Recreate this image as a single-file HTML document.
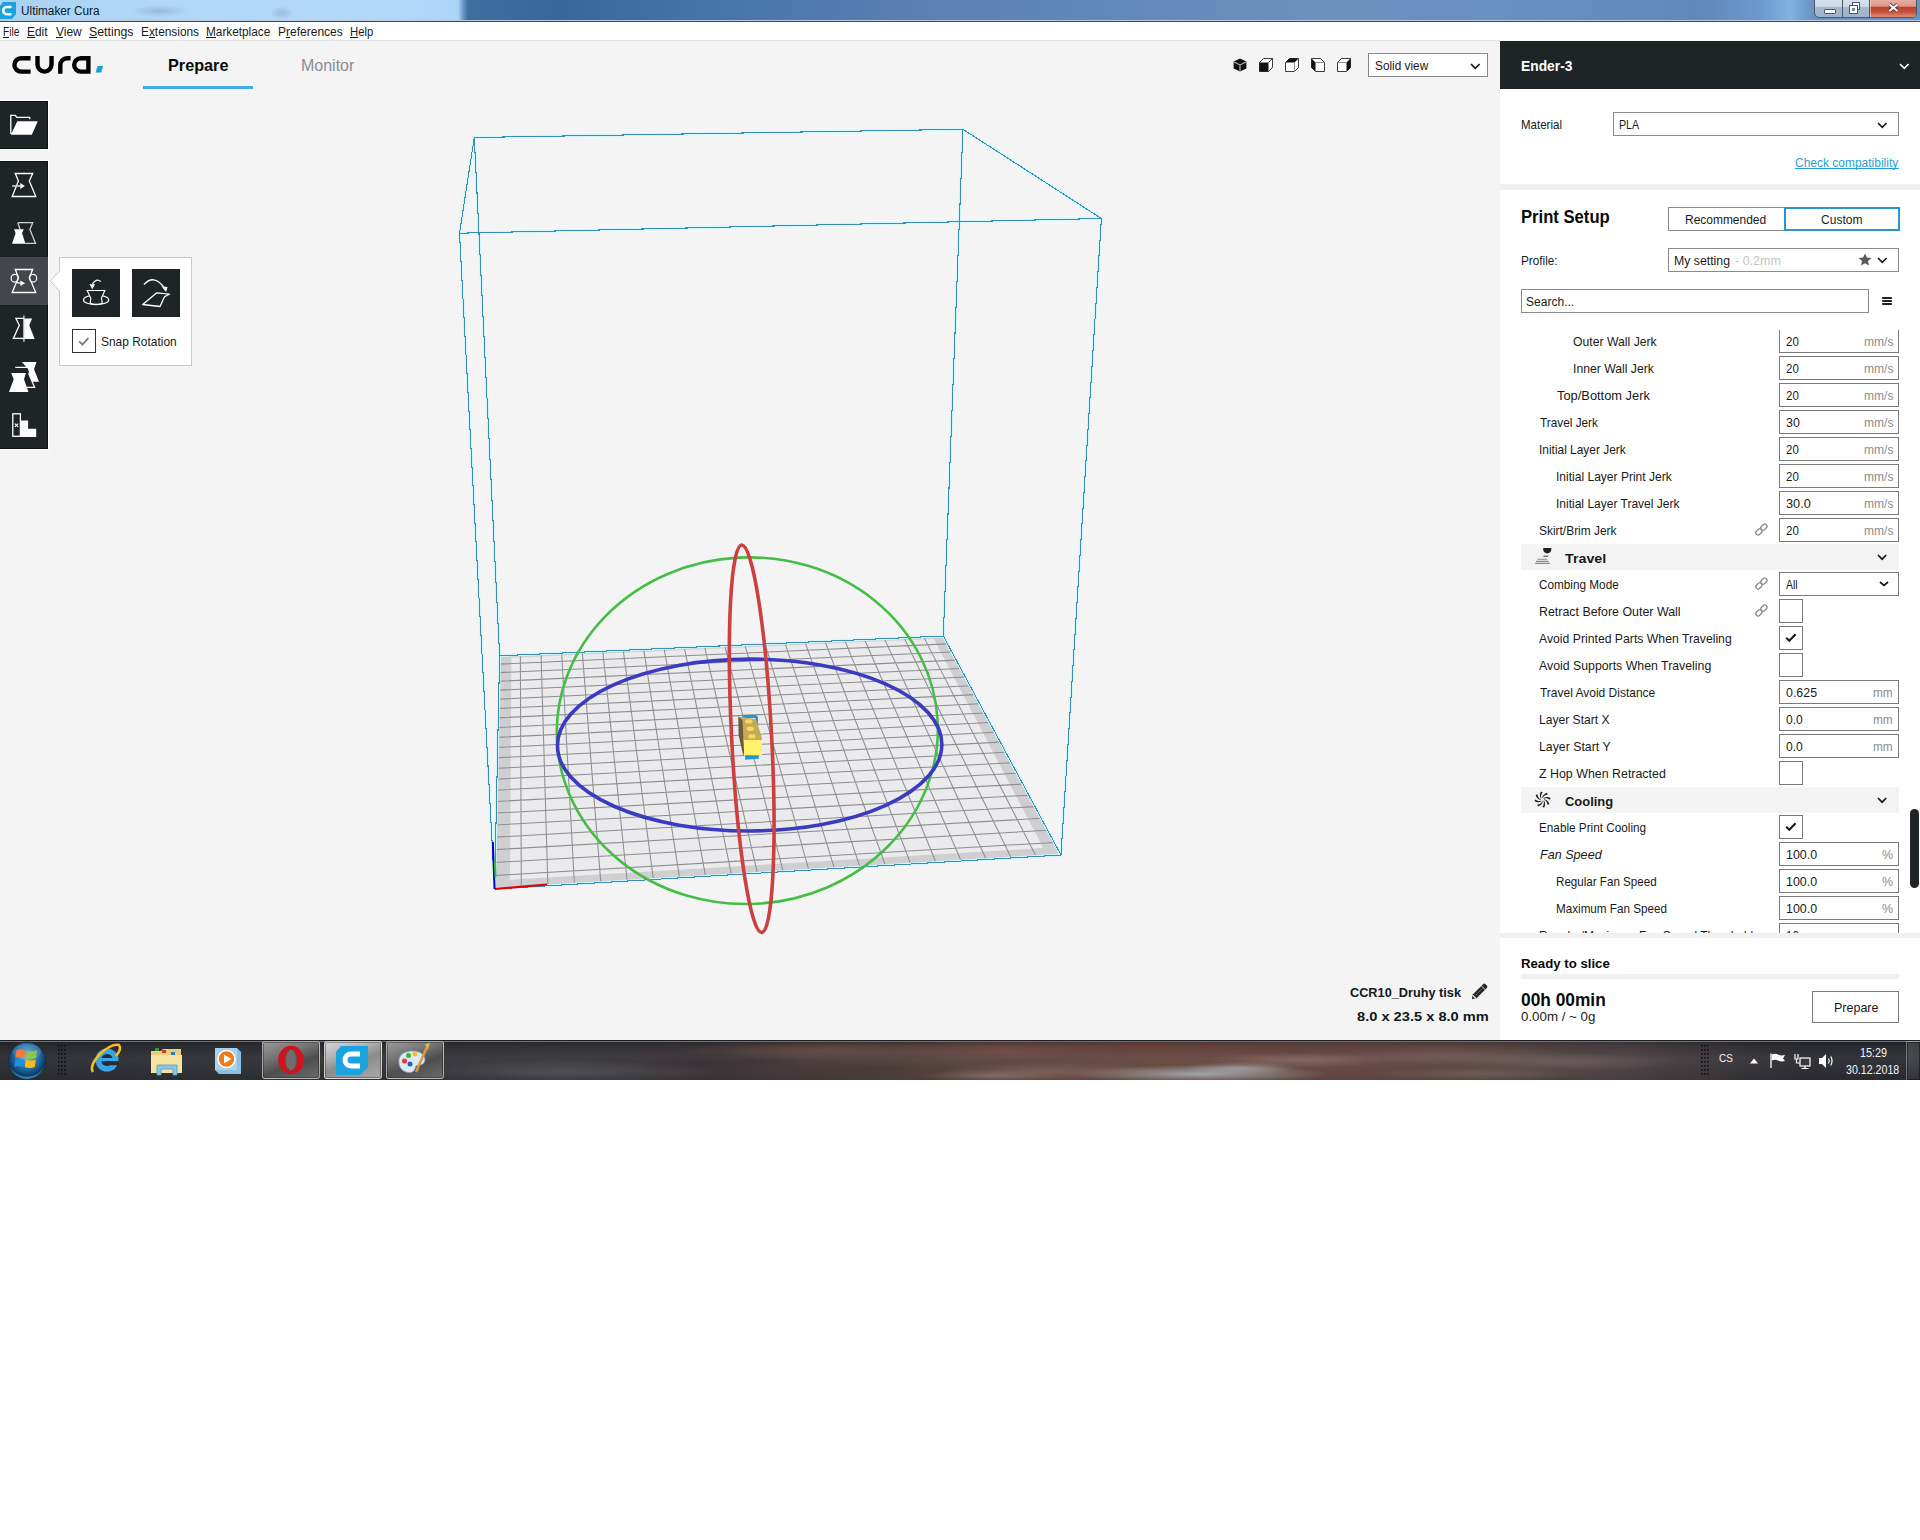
<!DOCTYPE html>
<html><head><meta charset="utf-8"><title>Ultimaker Cura</title>
<style>
html,body{margin:0;padding:0;}
body{width:1920px;height:1540px;position:relative;overflow:hidden;background:#fff;font-family:"Liberation Sans",sans-serif;}
.r,.t,.s{position:absolute;}
.t{white-space:nowrap;transform-origin:0 0;}
.s{overflow:visible;}
</style></head><body>
<div class="r" style="left:0.00px;top:0.00px;width:1920.00px;height:1540.00px;background:#ffffff;"></div>
<div class="r" style="left:0.00px;top:41.00px;width:1500.00px;height:999.00px;background:#f4f4f4;"></div>
<div class="r" style="left:0;top:0;width:1920px;height:21px;background:linear-gradient(90deg,#a8d2f2 0px,#aed6f6 100px,#b2d8f8 300px,#acd6f8 458px,#6a9ac8 463px,#3d6e9c 468px,#38689a 560px,#4474a8 700px,#587fb0 900px,#6088b8 1100px,#6a90bf 1300px,#6890c0 1500px,#6088b8 1700px,#6c9acb 1760px,#80b2de 1790px,#6a94c4 1812px,#6a92c2 1920px);"></div>
<div class="r" style="left:130px;top:5px;width:60px;height:12px;background:radial-gradient(ellipse at center,rgba(40,60,90,0.18),rgba(40,60,90,0) 70%)"></div>
<div class="r" style="left:270px;top:6px;width:24px;height:14px;background:radial-gradient(ellipse at center,rgba(40,60,90,0.18),rgba(40,60,90,0) 70%)"></div>
<div class="r" style="left:0.00px;top:20.00px;width:1920.00px;height:1.00px;background:#b6cce4;"></div>
<div class="r" style="left:0.00px;top:21.00px;width:1920.00px;height:1.00px;background:#3b4a5a;"></div>
<svg class="s" style="left:0.00px;top:2.00px;" width="16" height="17" viewBox="0 0 16 17"><path d="M3,0 H16 V12 L12,17 H0 V4 Z" fill="#1aa3de"/><path d="M11.5,5 H6.8 A3.6,3.6 0 0 0 6.8,12.2 H11.5" stroke="#fff" stroke-width="2.6" fill="none"/></svg>
<div class="t" style="left:21.40px;top:5.39px;font-size:12.50px;line-height:13.96px;color:#101820;transform:scaleX(0.9430);">Ultimaker Cura</div>
<div class="r" style="left:1814px;top:-3px;width:103px;height:21px;border:1px solid #4a5868;border-radius:0 0 5px 5px;box-sizing:border-box;overflow:hidden;background:linear-gradient(180deg,#dbe6f1 0,#c9d8e8 45%,#a4b9d0 46%,#9fb4cc 100%)"><div style="position:absolute;left:27px;top:0;width:1px;height:21px;background:#4a5868"></div><div style="position:absolute;left:54px;top:0;width:1px;height:21px;background:#4a5868"></div><div style="position:absolute;left:55px;top:0;width:47px;height:20px;background:linear-gradient(180deg,#eab4aa 0,#e0968a 42%,#b8402c 44%,#c8503a 70%,#e49a88 100%);box-shadow:inset 0 0 0 1px rgba(255,220,210,0.6)"></div></div>
<div class="r" style="left:1824.00px;top:8.50px;width:10.00px;height:3.00px;background:#fff;border:1px solid #4c5868;box-sizing:content-box;border-radius:1px;"></div>
<svg class="s" style="left:1848.00px;top:1.00px;" width="14" height="14" viewBox="0 0 14 14"><rect x="4.5" y="1.5" width="7" height="7" fill="#fff" stroke="#4c5868"/><rect x="1.5" y="4.5" width="8" height="8" fill="#fff" stroke="#4c5868"/><rect x="4" y="7" width="3" height="3" fill="#7a8898"/></svg>
<svg class="s" style="left:1886.00px;top:2.00px;" width="14" height="12" viewBox="0 0 14 12"><path d="M3.35,2.45 L11.45,8.95 M11.45,2.45 L3.35,8.95" stroke="#4a3030" stroke-width="3.6"/><path d="M3.35,2.45 L11.45,8.95 M11.45,2.45 L3.35,8.95" stroke="#fff" stroke-width="2.1"/></svg>
<div class="r" style="left:0.00px;top:22.00px;width:1920.00px;height:18.00px;background:#ffffff;"></div>
<div class="r" style="left:0.00px;top:40.00px;width:1920.00px;height:1.00px;background:#e2e2e2;"></div>
<div class="t" style="left:3.00px;top:25.79px;font-size:12.50px;line-height:13.96px;color:#1a1a1a;transform:scaleX(0.8192);">File</div>
<div class="r" style="left:3.00px;top:37.00px;width:6.25px;height:1.00px;background:#1a1a1a;"></div>
<div class="t" style="left:27.00px;top:25.79px;font-size:12.50px;line-height:13.96px;color:#1a1a1a;transform:scaleX(0.9517);">Edit</div>
<div class="r" style="left:27.00px;top:37.00px;width:7.94px;height:1.00px;background:#1a1a1a;"></div>
<div class="t" style="left:55.50px;top:25.79px;font-size:12.50px;line-height:13.96px;color:#1a1a1a;transform:scaleX(0.9583);">View</div>
<div class="r" style="left:55.50px;top:37.00px;width:7.99px;height:1.00px;background:#1a1a1a;"></div>
<div class="t" style="left:89.25px;top:25.79px;font-size:12.50px;line-height:13.96px;color:#1a1a1a;transform:scaleX(0.9852);">Settings</div>
<div class="r" style="left:89.25px;top:37.00px;width:8.21px;height:1.00px;background:#1a1a1a;"></div>
<div class="t" style="left:141.25px;top:25.79px;font-size:12.50px;line-height:13.96px;color:#1a1a1a;transform:scaleX(0.9485);">Extensions</div>
<div class="r" style="left:149.16px;top:37.00px;width:5.93px;height:1.00px;background:#1a1a1a;"></div>
<div class="t" style="left:206.25px;top:25.79px;font-size:12.50px;line-height:13.96px;color:#1a1a1a;transform:scaleX(0.9436);">Marketplace</div>
<div class="r" style="left:206.25px;top:37.00px;width:9.83px;height:1.00px;background:#1a1a1a;"></div>
<div class="t" style="left:278.25px;top:25.79px;font-size:12.50px;line-height:13.96px;color:#1a1a1a;transform:scaleX(0.9607);">Preferences</div>
<div class="r" style="left:286.26px;top:37.00px;width:4.00px;height:1.00px;background:#1a1a1a;"></div>
<div class="t" style="left:350.00px;top:25.79px;font-size:12.50px;line-height:13.96px;color:#1a1a1a;transform:scaleX(0.9044);">Help</div>
<div class="r" style="left:350.00px;top:37.00px;width:8.16px;height:1.00px;background:#1a1a1a;"></div>
<svg class="s" style="left:0.00px;top:40.00px;" width="120" height="50" viewBox="0 0 120 50"><g transform="translate(0,-40)" fill="#000" fill-rule="evenodd"><path d="M30.6,56 H21.1 A8.9,8.9 0 0 0 21.1,73.8 H30.6 V69.4 H21.1 A4.5,4.5 0 0 1 21.1,60.4 H30.6 Z"/><path d="M35.3,56 H39.7 V64.6 A4.8,4.8 0 0 0 49.3,64.6 V56 H53.75 V64.6 A9.2,9.2 0 0 1 35.3,64.6 Z"/><path d="M58.1,73.8 V65 A9,9 0 0 1 67.1,56 H70.6 V60.4 H67.1 A4.6,4.6 0 0 0 62.5,65 V73.8 Z"/><path d="M90.6,56 H80.9 A8.9,8.9 0 0 0 80.9,73.8 H90.6 Z M86.2,60.4 H80.9 A4.5,4.5 0 0 0 80.9,69.4 H86.2 Z"/><path d="M97.5,66 H103.2 L101.2,72.6 H95.6 Z" fill="#1e9fd8"/></g></svg>
<div class="t" style="left:167.50px;top:55.75px;font-size:17.30px;line-height:19.32px;color:#0a0a0a;font-weight:bold;transform:scaleX(0.9391);">Prepare</div>
<div class="t" style="left:301.00px;top:55.75px;font-size:17.30px;line-height:19.32px;color:#8c8c94;transform:scaleX(0.9258);">Monitor</div>
<div class="r" style="left:143.00px;top:86.00px;width:110.00px;height:3.00px;background:#44ace4;"></div>
<svg class="s" style="left:1232.50px;top:57.50px;" width="15" height="15" viewBox="0 0 15 15"><path d="M7,0.6 L13.4,3.6 L13.4,10.4 L7,13.6 L0.6,10.4 L0.6,3.6 Z" fill="#111"/><path d="M1,3.9 L7,7 L13,3.9 M7,7 V13.4" stroke="#bbb" stroke-width="1.1" fill="none"/></svg>
<svg class="s" style="left:1258.50px;top:57.50px;" width="15" height="15" viewBox="0 0 15 15"><path d="M0.5,4.5 L4.5,0.5 H13.5 V9.5 L9.5,13.5 H0.5 Z" fill="#fff" stroke="#1a1a1a" stroke-width="0.85" stroke-linejoin="miter"/><rect x="0.5" y="4.5" width="9" height="9" fill="#111"/><path d="M9.5,4.5 L13.5,0.5" stroke="#1a1a1a" stroke-width="0.85" stroke-linejoin="miter"/></svg>
<svg class="s" style="left:1284.50px;top:57.50px;" width="15" height="15" viewBox="0 0 15 15"><path d="M0.5,4.5 L4.5,0.5 H13.5 V9.5 L9.5,13.5 H0.5 Z" fill="#fff" stroke="#1a1a1a" stroke-width="0.85" stroke-linejoin="miter"/><path d="M0.5,4.5 L4.5,0.5 H13.5 L9.5,4.5 Z" fill="#111"/><path d="M9.5,4.5 V13.5" stroke="#888" stroke-width="0.9"/></svg>
<svg class="s" style="left:1310.50px;top:57.50px;" width="15" height="15" viewBox="0 0 15 15"><path d="M0.5,0.5 H9.5 L13.5,4.5 V13.5 H4.5 L0.5,9.5 Z" fill="#fff" stroke="#1a1a1a" stroke-width="0.85" stroke-linejoin="miter"/><path d="M0.5,0.5 L4.5,4.5 V13.5 L0.5,9.5 Z" fill="#111"/><path d="M4.5,4.5 H13.5" stroke="#888" stroke-width="0.9"/></svg>
<svg class="s" style="left:1336.50px;top:57.50px;" width="15" height="15" viewBox="0 0 15 15"><path d="M0.5,4.5 L4.5,0.5 H13.5 V9.5 L9.5,13.5 H0.5 Z" fill="#fff" stroke="#1a1a1a" stroke-width="0.85" stroke-linejoin="miter"/><path d="M9.5,4.5 L13.5,0.5 V9.5 L9.5,13.5 Z" fill="#111"/><path d="M0.5,4.5 H9.5" stroke="#888" stroke-width="0.9"/></svg>
<div class="r" style="left:1368.00px;top:53.00px;width:120.00px;height:24.00px;background:#fff;border:1px solid #8a8a8a;box-sizing:border-box;"></div>
<div class="t" style="left:1375.30px;top:58.66px;font-size:13.08px;line-height:14.61px;color:#1a1a1a;transform:scaleX(0.9033);">Solid view</div>
<svg class="s" style="left:1470.00px;top:62.50px;" width="10.6" height="6.3" viewBox="0 0 10.6 6.3"><path d="M1,1 L5.30,5.30 L9.60,1" stroke="#1a1a1a" stroke-width="1.7" fill="none"/></svg>
<div class="r" style="left:1500.00px;top:40.00px;width:420.00px;height:1000.00px;background:#ffffff;"></div>
<div class="r" style="left:1500.00px;top:41.00px;width:420.00px;height:48.00px;background:#1f2427;"></div>
<div class="t" style="left:1521.40px;top:57.91px;font-size:14.68px;line-height:16.40px;color:#fff;font-weight:bold;transform:scaleX(0.9422);">Ender-3</div>
<svg class="s" style="left:1899.00px;top:62.70px;" width="10.6" height="6.3" viewBox="0 0 10.6 6.3"><path d="M1,1 L5.30,5.30 L9.60,1" stroke="#fff" stroke-width="1.7" fill="none"/></svg>
<div class="t" style="left:1521.20px;top:118.30px;font-size:13.37px;line-height:14.94px;color:#1a1a1a;transform:scaleX(0.8620);">Material</div>
<div class="r" style="left:1613.00px;top:112.00px;width:286.00px;height:24.00px;background:#fff;border:1px solid #8a8a8a;box-sizing:border-box;"></div>
<div class="t" style="left:1619.20px;top:118.30px;font-size:13.37px;line-height:14.94px;color:#1a1a1a;transform:scaleX(0.7992);">PLA</div>
<svg class="s" style="left:1877.00px;top:121.50px;" width="10.6" height="6.3" viewBox="0 0 10.6 6.3"><path d="M1,1 L5.30,5.30 L9.60,1" stroke="#1a1a1a" stroke-width="1.7" fill="none"/></svg>
<div class="t" style="left:1795.30px;top:155.60px;font-size:13.37px;line-height:14.94px;color:#2a9fd6;transform:scaleX(0.8968);">Check compatibility</div>
<div class="r" style="left:1795.30px;top:168.00px;width:103.30px;height:1.00px;background:#2a9fd6;"></div>
<div class="r" style="left:1500.00px;top:184.00px;width:420.00px;height:6.00px;background:#f0f0f0;"></div>
<div class="t" style="left:1521.20px;top:208.32px;font-size:17.88px;line-height:19.97px;color:#0a0a0a;font-weight:bold;transform:scaleX(0.9313);">Print Setup</div>
<div class="r" style="left:1668.00px;top:207.00px;width:117.00px;height:24.00px;background:#fff;border:1px solid #8a8a8a;box-sizing:border-box;"></div>
<div class="r" style="left:1784.00px;top:207.00px;width:116.00px;height:24.00px;background:#fff;border:2px solid #2896c8;box-sizing:border-box;"></div>
<div class="t" style="left:1685.30px;top:213.30px;font-size:13.37px;line-height:14.94px;color:#1a1a1a;transform:scaleX(0.8954);">Recommended</div>
<div class="t" style="left:1821.00px;top:213.30px;font-size:13.37px;line-height:14.94px;color:#1a1a1a;transform:scaleX(0.9008);">Custom</div>
<div class="t" style="left:1521.20px;top:254.26px;font-size:13.08px;line-height:14.61px;color:#1a1a1a;transform:scaleX(0.8989);">Profile:</div>
<div class="r" style="left:1668.00px;top:248.00px;width:231.00px;height:24.00px;background:#fff;border:1px solid #8a8a8a;box-sizing:border-box;"></div>
<div class="t" style="left:1674.40px;top:254.26px;font-size:13.08px;line-height:14.61px;color:#1a1a1a;transform:scaleX(0.9394);">My setting</div>
<div class="t" style="left:1735.20px;top:254.26px;font-size:13.08px;line-height:14.61px;color:#c4c4c4;transform:scaleX(0.9568);">- 0.2mm</div>
<svg class="s" style="left:1858.00px;top:253.00px;" width="14" height="13" viewBox="0 0 14 13"><path d="M7,0.5 L8.9,4.6 L13.4,5 L10,8 L11,12.5 L7,10.2 L3,12.5 L4,8 L0.6,5 L5.1,4.6 Z" fill="#5a5a5a"/></svg>
<svg class="s" style="left:1877.00px;top:257.20px;" width="10.6" height="6.3" viewBox="0 0 10.6 6.3"><path d="M1,1 L5.30,5.30 L9.60,1" stroke="#1a1a1a" stroke-width="1.7" fill="none"/></svg>
<div class="r" style="left:1521.00px;top:289.00px;width:348.00px;height:24.00px;background:#fff;border:1px solid #8a8a8a;box-sizing:border-box;"></div>
<div class="t" style="left:1526.25px;top:295.16px;font-size:13.08px;line-height:14.61px;color:#1a1a1a;transform:scaleX(0.9207);">Search...</div>
<div class="r" style="left:1882.00px;top:297.00px;width:10.00px;height:1.60px;background:#222;border-radius:0.8px;"></div>
<div class="r" style="left:1882.00px;top:300.20px;width:10.00px;height:1.60px;background:#222;border-radius:0.8px;"></div>
<div class="r" style="left:1882.00px;top:303.40px;width:10.00px;height:1.60px;background:#222;border-radius:0.8px;"></div>
<div class="r" style="left:1500px;top:330px;width:420px;height:603px;overflow:hidden">
<div class="t" style="left:73.30px;top:6.12px;font-size:12.35px;line-height:13.80px;color:#1a1a1a;transform:scaleX(0.9897);">Outer Wall Jerk</div>
<div class="r" style="left:279.00px;top:-1.00px;width:120.00px;height:24.00px;background:#fff;border:1px solid #7a7a7a;box-sizing:border-box;"></div>
<div class="t" style="left:285.50px;top:6.12px;font-size:12.35px;line-height:13.80px;color:#1a1a1a;transform:scaleX(0.9314);">20</div>
<div class="t" style="left:363.50px;top:6.12px;font-size:12.35px;line-height:13.80px;color:#8c8c8c;transform:scaleX(0.9770);">mm/s</div>
<div class="t" style="left:73.30px;top:33.12px;font-size:12.35px;line-height:13.80px;color:#1a1a1a;transform:scaleX(0.9874);">Inner Wall Jerk</div>
<div class="r" style="left:279.00px;top:26.00px;width:120.00px;height:24.00px;background:#fff;border:1px solid #7a7a7a;box-sizing:border-box;"></div>
<div class="t" style="left:285.50px;top:33.12px;font-size:12.35px;line-height:13.80px;color:#1a1a1a;transform:scaleX(0.9314);">20</div>
<div class="t" style="left:363.50px;top:33.12px;font-size:12.35px;line-height:13.80px;color:#8c8c8c;transform:scaleX(0.9770);">mm/s</div>
<div class="t" style="left:57.30px;top:60.12px;font-size:12.35px;line-height:13.80px;color:#1a1a1a;transform:scaleX(1.0418);">Top/Bottom Jerk</div>
<div class="r" style="left:279.00px;top:53.00px;width:120.00px;height:24.00px;background:#fff;border:1px solid #7a7a7a;box-sizing:border-box;"></div>
<div class="t" style="left:285.50px;top:60.12px;font-size:12.35px;line-height:13.80px;color:#1a1a1a;transform:scaleX(0.9314);">20</div>
<div class="t" style="left:363.50px;top:60.12px;font-size:12.35px;line-height:13.80px;color:#8c8c8c;transform:scaleX(0.9770);">mm/s</div>
<div class="t" style="left:40.00px;top:87.12px;font-size:12.35px;line-height:13.80px;color:#1a1a1a;transform:scaleX(0.9564);">Travel Jerk</div>
<div class="r" style="left:279.00px;top:80.00px;width:120.00px;height:24.00px;background:#fff;border:1px solid #7a7a7a;box-sizing:border-box;"></div>
<div class="t" style="left:285.50px;top:87.12px;font-size:12.35px;line-height:13.80px;color:#1a1a1a;transform:scaleX(1.0042);">30</div>
<div class="t" style="left:363.50px;top:87.12px;font-size:12.35px;line-height:13.80px;color:#8c8c8c;transform:scaleX(0.9770);">mm/s</div>
<div class="t" style="left:39.40px;top:114.12px;font-size:12.35px;line-height:13.80px;color:#1a1a1a;transform:scaleX(0.9649);">Initial Layer Jerk</div>
<div class="r" style="left:279.00px;top:107.00px;width:120.00px;height:24.00px;background:#fff;border:1px solid #7a7a7a;box-sizing:border-box;"></div>
<div class="t" style="left:285.50px;top:114.12px;font-size:12.35px;line-height:13.80px;color:#1a1a1a;transform:scaleX(0.9314);">20</div>
<div class="t" style="left:363.50px;top:114.12px;font-size:12.35px;line-height:13.80px;color:#8c8c8c;transform:scaleX(0.9770);">mm/s</div>
<div class="t" style="left:56.40px;top:141.12px;font-size:12.35px;line-height:13.80px;color:#1a1a1a;transform:scaleX(0.9748);">Initial Layer Print Jerk</div>
<div class="r" style="left:279.00px;top:134.00px;width:120.00px;height:24.00px;background:#fff;border:1px solid #7a7a7a;box-sizing:border-box;"></div>
<div class="t" style="left:285.50px;top:141.12px;font-size:12.35px;line-height:13.80px;color:#1a1a1a;transform:scaleX(0.9314);">20</div>
<div class="t" style="left:363.50px;top:141.12px;font-size:12.35px;line-height:13.80px;color:#8c8c8c;transform:scaleX(0.9770);">mm/s</div>
<div class="t" style="left:56.40px;top:168.12px;font-size:12.35px;line-height:13.80px;color:#1a1a1a;transform:scaleX(0.9730);">Initial Layer Travel Jerk</div>
<div class="r" style="left:279.00px;top:161.00px;width:120.00px;height:24.00px;background:#fff;border:1px solid #7a7a7a;box-sizing:border-box;"></div>
<div class="t" style="left:285.50px;top:168.12px;font-size:12.35px;line-height:13.80px;color:#1a1a1a;transform:scaleX(1.0313);">30.0</div>
<div class="t" style="left:363.50px;top:168.12px;font-size:12.35px;line-height:13.80px;color:#8c8c8c;transform:scaleX(0.9770);">mm/s</div>
<div class="t" style="left:39.40px;top:195.12px;font-size:12.35px;line-height:13.80px;color:#1a1a1a;transform:scaleX(0.9663);">Skirt/Brim Jerk</div>
<svg class="s" style="left:254.00px;top:192.00px;" width="16" height="16" viewBox="0 0 16 16"><g fill="none" stroke="#8a8a8a" stroke-width="1.3"><rect x="1.5" y="7.7" width="6.8" height="4.4" rx="2" transform="rotate(-45 4.9 9.9)"/><rect x="6.5" y="2.9" width="6.8" height="4.4" rx="2" transform="rotate(-45 9.9 5.1)"/></g></svg>
<div class="r" style="left:279.00px;top:188.00px;width:120.00px;height:24.00px;background:#fff;border:1px solid #7a7a7a;box-sizing:border-box;"></div>
<div class="t" style="left:285.50px;top:195.12px;font-size:12.35px;line-height:13.80px;color:#1a1a1a;transform:scaleX(0.9314);">20</div>
<div class="t" style="left:363.50px;top:195.12px;font-size:12.35px;line-height:13.80px;color:#8c8c8c;transform:scaleX(0.9770);">mm/s</div>
<div class="r" style="left:21.00px;top:214.00px;width:378.00px;height:25.50px;background:#f3f3f3;"></div>
<div class="t" style="left:64.50px;top:221.69px;font-size:12.94px;line-height:14.45px;color:#1a1a1a;font-weight:bold;transform:scaleX(1.1016);">Travel</div>
<svg class="s" style="left:34.00px;top:218.00px;" width="17" height="18" viewBox="0 0 17 18"><path d="M9.2,0 H17.3 V1.5 A4,4 0 0 1 13.25,5.5 A4,4 0 0 1 9.2,1.5 Z" fill="#222"/><path d="M9.4,8.25 H14.1" stroke="#555" stroke-width="1.2"/><path d="M3.4,11.3 H13.3 M2.1,13.35 H14.6 M1.1,15.4 H15.9" stroke="#8a8a8a" stroke-width="1.1"/></svg>
<svg class="s" style="left:377.00px;top:223.60px;" width="12" height="8" viewBox="0 0 12 8"><path d="M1,1 L5.1,5.2 L9.2,1" stroke="#1a1a1a" stroke-width="1.7" fill="none"/></svg>
<div class="t" style="left:39.40px;top:249.12px;font-size:12.35px;line-height:13.80px;color:#1a1a1a;transform:scaleX(0.9525);">Combing Mode</div>
<svg class="s" style="left:254.00px;top:246.00px;" width="16" height="16" viewBox="0 0 16 16"><g fill="none" stroke="#8a8a8a" stroke-width="1.3"><rect x="1.5" y="7.7" width="6.8" height="4.4" rx="2" transform="rotate(-45 4.9 9.9)"/><rect x="6.5" y="2.9" width="6.8" height="4.4" rx="2" transform="rotate(-45 9.9 5.1)"/></g></svg>
<div class="r" style="left:279.00px;top:242.00px;width:120.00px;height:24.00px;background:#fff;border:1px solid #7a7a7a;box-sizing:border-box;"></div>
<div class="t" style="left:285.50px;top:249.12px;font-size:12.35px;line-height:13.80px;color:#1a1a1a;transform:scaleX(0.8448);">All</div>
<svg class="s" style="left:379.00px;top:251.00px;" width="12" height="8" viewBox="0 0 12 8"><path d="M1,1 L5,4.4 L9,1" stroke="#1a1a1a" stroke-width="1.7" fill="none"/></svg>
<div class="t" style="left:39.40px;top:276.12px;font-size:12.35px;line-height:13.80px;color:#1a1a1a;transform:scaleX(1.0051);">Retract Before Outer Wall</div>
<svg class="s" style="left:254.00px;top:273.00px;" width="16" height="16" viewBox="0 0 16 16"><g fill="none" stroke="#8a8a8a" stroke-width="1.3"><rect x="1.5" y="7.7" width="6.8" height="4.4" rx="2" transform="rotate(-45 4.9 9.9)"/><rect x="6.5" y="2.9" width="6.8" height="4.4" rx="2" transform="rotate(-45 9.9 5.1)"/></g></svg>
<div class="r" style="left:279.00px;top:269.00px;width:24.00px;height:24.00px;background:#fff;border:1px solid #7a7a7a;box-sizing:border-box;"></div>
<div class="t" style="left:39.40px;top:303.12px;font-size:12.35px;line-height:13.80px;color:#1a1a1a;transform:scaleX(0.9902);">Avoid Printed Parts When Traveling</div>
<div class="r" style="left:279.00px;top:296.00px;width:24.00px;height:24.00px;background:#fff;border:1px solid #7a7a7a;box-sizing:border-box;"></div>
<svg class="s" style="left:285.00px;top:303.00px;" width="12" height="10" viewBox="0 0 12 10"><path d="M1.2,4.8 L4.3,7.8 L10.6,1.2" stroke="#1a1a1a" stroke-width="2" fill="none"/></svg>
<div class="t" style="left:39.40px;top:330.12px;font-size:12.35px;line-height:13.80px;color:#1a1a1a;transform:scaleX(0.9975);">Avoid Supports When Traveling</div>
<div class="r" style="left:279.00px;top:323.00px;width:24.00px;height:24.00px;background:#fff;border:1px solid #7a7a7a;box-sizing:border-box;"></div>
<div class="t" style="left:40.00px;top:357.12px;font-size:12.35px;line-height:13.80px;color:#1a1a1a;transform:scaleX(0.9705);">Travel Avoid Distance</div>
<div class="r" style="left:279.00px;top:350.00px;width:120.00px;height:24.00px;background:#fff;border:1px solid #7a7a7a;box-sizing:border-box;"></div>
<div class="t" style="left:285.50px;top:357.12px;font-size:12.35px;line-height:13.80px;color:#1a1a1a;transform:scaleX(1.0059);">0.625</div>
<div class="t" style="left:373.30px;top:357.12px;font-size:12.35px;line-height:13.80px;color:#8c8c8c;transform:scaleX(0.9571);">mm</div>
<div class="t" style="left:39.40px;top:384.12px;font-size:12.35px;line-height:13.80px;color:#1a1a1a;transform:scaleX(0.9792);">Layer Start X</div>
<div class="r" style="left:279.00px;top:377.00px;width:120.00px;height:24.00px;background:#fff;border:1px solid #7a7a7a;box-sizing:border-box;"></div>
<div class="t" style="left:285.50px;top:384.12px;font-size:12.35px;line-height:13.80px;color:#1a1a1a;transform:scaleX(0.9782);">0.0</div>
<div class="t" style="left:373.30px;top:384.12px;font-size:12.35px;line-height:13.80px;color:#8c8c8c;transform:scaleX(0.9571);">mm</div>
<div class="t" style="left:39.40px;top:411.12px;font-size:12.35px;line-height:13.80px;color:#1a1a1a;transform:scaleX(0.9975);">Layer Start Y</div>
<div class="r" style="left:279.00px;top:404.00px;width:120.00px;height:24.00px;background:#fff;border:1px solid #7a7a7a;box-sizing:border-box;"></div>
<div class="t" style="left:285.50px;top:411.12px;font-size:12.35px;line-height:13.80px;color:#1a1a1a;transform:scaleX(0.9782);">0.0</div>
<div class="t" style="left:373.30px;top:411.12px;font-size:12.35px;line-height:13.80px;color:#8c8c8c;transform:scaleX(0.9571);">mm</div>
<div class="t" style="left:39.40px;top:438.12px;font-size:12.35px;line-height:13.80px;color:#1a1a1a;transform:scaleX(1.0044);">Z Hop When Retracted</div>
<div class="r" style="left:279.00px;top:431.00px;width:24.00px;height:24.00px;background:#fff;border:1px solid #7a7a7a;box-sizing:border-box;"></div>
<div class="r" style="left:21.00px;top:457.00px;width:378.00px;height:25.50px;background:#f3f3f3;"></div>
<div class="t" style="left:65.00px;top:464.69px;font-size:12.94px;line-height:14.45px;color:#1a1a1a;font-weight:bold;transform:scaleX(0.9992);">Cooling</div>
<svg class="s" style="left:34.00px;top:461.00px;" width="17" height="17" viewBox="0 0 17 17"><path d="M10.05,8.85 L10.72,9.13 L11.34,9.52 L11.88,10.01 L12.36,10.59 L12.75,11.25 L13.04,11.99 L13.24,12.79 L13.33,13.63 L15.31,13.34 L14.98,12.27 L14.52,11.31 L13.95,10.47 L13.29,9.76 L12.55,9.18 L11.77,8.76 L10.96,8.48 L10.15,8.35 Z" fill="#1e1e1e"/><path d="M9.43,9.87 L9.70,10.54 L9.86,11.25 L9.90,11.99 L9.82,12.73 L9.63,13.48 L9.32,14.21 L8.89,14.91 L8.36,15.58 L9.97,16.77 L10.49,15.78 L10.84,14.77 L11.03,13.78 L11.07,12.80 L10.95,11.88 L10.70,11.02 L10.32,10.26 L9.84,9.59 Z" fill="#1e1e1e"/><path d="M8.25,10.15 L7.97,10.82 L7.58,11.44 L7.09,11.98 L6.51,12.46 L5.85,12.85 L5.11,13.14 L4.31,13.34 L3.47,13.43 L3.76,15.41 L4.83,15.08 L5.79,14.62 L6.63,14.05 L7.34,13.39 L7.92,12.65 L8.34,11.87 L8.62,11.06 L8.75,10.25 Z" fill="#1e1e1e"/><path d="M7.23,9.53 L6.56,9.80 L5.85,9.96 L5.11,10.00 L4.37,9.92 L3.62,9.73 L2.89,9.42 L2.19,8.99 L1.52,8.46 L0.33,10.07 L1.32,10.59 L2.33,10.94 L3.32,11.13 L4.30,11.17 L5.22,11.05 L6.08,10.80 L6.84,10.42 L7.51,9.94 Z" fill="#1e1e1e"/><path d="M6.95,8.35 L6.28,8.07 L5.66,7.68 L5.12,7.19 L4.64,6.61 L4.25,5.95 L3.96,5.21 L3.76,4.41 L3.67,3.57 L1.69,3.86 L2.02,4.93 L2.48,5.89 L3.05,6.73 L3.71,7.44 L4.45,8.02 L5.23,8.44 L6.04,8.72 L6.85,8.85 Z" fill="#1e1e1e"/><path d="M7.57,7.33 L7.30,6.66 L7.14,5.95 L7.10,5.21 L7.18,4.47 L7.37,3.72 L7.68,2.99 L8.11,2.29 L8.64,1.62 L7.03,0.43 L6.51,1.42 L6.16,2.43 L5.97,3.42 L5.93,4.40 L6.05,5.32 L6.30,6.18 L6.68,6.94 L7.16,7.61 Z" fill="#1e1e1e"/><path d="M8.75,7.05 L9.03,6.38 L9.42,5.76 L9.91,5.22 L10.49,4.74 L11.15,4.35 L11.89,4.06 L12.69,3.86 L13.53,3.77 L13.24,1.79 L12.17,2.12 L11.21,2.58 L10.37,3.15 L9.66,3.81 L9.08,4.55 L8.66,5.33 L8.38,6.14 L8.25,6.95 Z" fill="#1e1e1e"/><path d="M9.77,7.67 L10.44,7.40 L11.15,7.24 L11.89,7.20 L12.63,7.28 L13.38,7.47 L14.11,7.78 L14.81,8.21 L15.48,8.74 L16.67,7.13 L15.68,6.61 L14.67,6.26 L13.68,6.07 L12.70,6.03 L11.78,6.15 L10.92,6.40 L10.16,6.78 L9.49,7.26 Z" fill="#1e1e1e"/></svg>
<svg class="s" style="left:377.00px;top:466.60px;" width="12" height="8" viewBox="0 0 12 8"><path d="M1,1 L5.1,5.2 L9.2,1" stroke="#1a1a1a" stroke-width="1.7" fill="none"/></svg>
<div class="t" style="left:39.40px;top:492.12px;font-size:12.35px;line-height:13.80px;color:#1a1a1a;transform:scaleX(0.9517);">Enable Print Cooling</div>
<div class="r" style="left:279.00px;top:485.00px;width:24.00px;height:24.00px;background:#fff;border:1px solid #7a7a7a;box-sizing:border-box;"></div>
<svg class="s" style="left:285.00px;top:492.00px;" width="12" height="10" viewBox="0 0 12 10"><path d="M1.2,4.8 L4.3,7.8 L10.6,1.2" stroke="#1a1a1a" stroke-width="2" fill="none"/></svg>
<div class="t" style="left:40.00px;top:519.12px;font-size:12.35px;line-height:13.80px;color:#1a1a1a;font-style:italic;transform:scaleX(1.0207);">Fan Speed</div>
<div class="r" style="left:279.00px;top:512.00px;width:120.00px;height:24.00px;background:#fff;border:1px solid #7a7a7a;box-sizing:border-box;"></div>
<div class="t" style="left:285.50px;top:519.12px;font-size:12.35px;line-height:13.80px;color:#1a1a1a;transform:scaleX(1.0059);">100.0</div>
<div class="t" style="left:382.00px;top:519.12px;font-size:12.35px;line-height:13.80px;color:#8c8c8c;transform:scaleX(1.0014);">%</div>
<div class="t" style="left:56.40px;top:546.12px;font-size:12.35px;line-height:13.80px;color:#1a1a1a;transform:scaleX(0.9398);">Regular Fan Speed</div>
<div class="r" style="left:279.00px;top:539.00px;width:120.00px;height:24.00px;background:#fff;border:1px solid #7a7a7a;box-sizing:border-box;"></div>
<div class="t" style="left:285.50px;top:546.12px;font-size:12.35px;line-height:13.80px;color:#1a1a1a;transform:scaleX(1.0059);">100.0</div>
<div class="t" style="left:382.00px;top:546.12px;font-size:12.35px;line-height:13.80px;color:#8c8c8c;transform:scaleX(1.0014);">%</div>
<div class="t" style="left:56.40px;top:573.12px;font-size:12.35px;line-height:13.80px;color:#1a1a1a;transform:scaleX(0.9453);">Maximum Fan Speed</div>
<div class="r" style="left:279.00px;top:566.00px;width:120.00px;height:24.00px;background:#fff;border:1px solid #7a7a7a;box-sizing:border-box;"></div>
<div class="t" style="left:285.50px;top:573.12px;font-size:12.35px;line-height:13.80px;color:#1a1a1a;transform:scaleX(1.0059);">100.0</div>
<div class="t" style="left:382.00px;top:573.12px;font-size:12.35px;line-height:13.80px;color:#8c8c8c;transform:scaleX(1.0014);">%</div>
<div class="t" style="left:39.40px;top:600.12px;font-size:12.35px;line-height:13.80px;color:#1a1a1a;transform:scaleX(0.9646);">Regular/Maximum Fan Speed Threshold</div>
<div class="r" style="left:279.00px;top:593.00px;width:120.00px;height:24.00px;background:#fff;border:1px solid #7a7a7a;box-sizing:border-box;"></div>
<div class="t" style="left:285.50px;top:600.12px;font-size:12.35px;line-height:13.80px;color:#1a1a1a;transform:scaleX(0.9314);">10</div>
<div class="t" style="left:387.00px;top:600.12px;font-size:12.35px;line-height:13.80px;color:#8c8c8c;transform:scaleX(0.9713);">s</div>
</div>
<div class="r" style="left:1910.00px;top:809.00px;width:9.00px;height:79.00px;background:#1f2427;border-radius:4.5px;"></div>
<div class="r" style="left:1500.00px;top:933.00px;width:420.00px;height:5.00px;background:#f0f0f0;"></div>
<div class="t" style="left:1521.20px;top:956.72px;font-size:12.79px;line-height:14.29px;color:#0a0a0a;font-weight:bold;transform:scaleX(1.0323);">Ready to slice</div>
<div class="r" style="left:1521.00px;top:974.00px;width:378.00px;height:5.00px;background:#f0f0f0;"></div>
<div class="t" style="left:1521.20px;top:990.72px;font-size:17.44px;line-height:19.48px;color:#0a0a0a;font-weight:bold;transform:scaleX(0.9940);">00h 00min</div>
<div class="t" style="left:1521.20px;top:1010.46px;font-size:12.65px;line-height:14.12px;color:#1a1a1a;transform:scaleX(1.0531);">0.00m / ~ 0g</div>
<div class="r" style="left:1812.00px;top:991.00px;width:87.00px;height:32.00px;background:#fff;border:1px solid #7a7a7a;box-sizing:border-box;"></div>
<div class="t" style="left:1833.50px;top:1001.00px;font-size:13.37px;line-height:14.94px;color:#1a1a1a;transform:scaleX(0.9354);">Prepare</div>
<svg class="s" style="left:0.00px;top:0.00px;" width="1500" height="1040" viewBox="0 0 1500 1040"><polygon points="499.60,655.80 943.30,636.00 1061.00,855.00 494.60,889.00" fill="#cfcfd2"/><polygon points="511.46,657.81 933.79,638.89 1043.29,848.04 509.94,879.76" fill="#ebebed"/><path d="M520.35,654.87 L521.30,887.40 M499.42,664.12 L947.53,643.88 M541.04,653.95 L547.91,885.80 M499.24,672.61 L951.85,651.91 M561.68,653.03 L574.42,884.21 M499.05,681.29 L956.26,660.11 M582.26,652.11 L600.84,882.62 M498.86,690.14 L960.76,668.48 M602.78,651.20 L627.16,881.04 M498.67,699.18 L965.35,677.02 M623.25,650.28 L653.40,879.47 M498.47,708.42 L970.03,685.74 M643.66,649.37 L679.54,877.90 M498.27,717.86 L974.82,694.64 M664.02,648.46 L705.59,876.33 M498.06,727.51 L979.70,703.73 M684.32,647.56 L731.55,874.78 M497.85,737.37 L984.70,713.02 M704.56,646.65 L757.42,873.22 M497.63,747.46 L989.80,722.52 M724.75,645.75 L783.20,871.68 M497.41,757.77 L995.01,732.22 M744.89,644.85 L808.90,870.13 M497.19,768.33 L1000.34,742.13 M764.97,643.96 L834.50,868.60 M496.96,779.13 L1005.79,752.28 M785.00,643.06 L860.01,867.06 M496.72,790.18 L1011.37,762.65 M804.97,642.17 L885.44,865.54 M496.48,801.50 L1017.07,773.26 M824.89,641.28 L910.78,864.02 M496.23,813.09 L1022.91,784.12 M844.76,640.40 L936.03,862.50 M495.97,824.97 L1028.88,795.23 M864.57,639.51 L961.20,860.99 M495.71,837.14 L1035.00,806.62 M884.34,638.63 L986.27,859.49 M495.44,849.62 L1041.26,818.27 M904.04,637.75 L1011.27,857.99 M495.17,862.41 L1047.68,830.22 M923.70,636.87 L1036.18,856.49 M494.89,875.53 L1054.26,842.45" stroke="#8e8e92" stroke-width="1.05" fill="none"/><path d="M474.30,137.50 L962.90,129.30 M962.90,129.30 L1101.40,218.50 M1101.40,218.50 L459.50,233.20 M459.50,233.20 L474.30,137.50 M474.30,137.50 L499.60,655.80 M962.90,129.30 L943.30,636.00 M1101.40,218.50 L1061.00,855.00 M459.50,233.20 L494.60,889.00 M499.60,655.80 L943.30,636.00 M943.30,636.00 L1061.00,855.00 M1061.00,855.00 L494.60,889.00 M494.60,889.00 L499.60,655.80" stroke="#cdf6fc" stroke-width="2.8" fill="none"/><path d="M474.30,137.50 L962.90,129.30 M962.90,129.30 L1101.40,218.50 M1101.40,218.50 L459.50,233.20 M459.50,233.20 L474.30,137.50 M474.30,137.50 L499.60,655.80 M962.90,129.30 L943.30,636.00 M1101.40,218.50 L1061.00,855.00 M459.50,233.20 L494.60,889.00 M499.60,655.80 L943.30,636.00 M943.30,636.00 L1061.00,855.00 M1061.00,855.00 L494.60,889.00 M494.60,889.00 L499.60,655.80" stroke="#3a8fb2" stroke-width="1.05" fill="none" shape-rendering="crispEdges"/><path d="M494.6,889 L547,884.5" stroke="#e00000" stroke-width="2.2"/><path d="M492.8,842 L494.6,889" stroke="#0000c8" stroke-width="2"/><path d="M495,862 L495.5,877.5" stroke="#22cc22" stroke-width="2"/><g><path d="M742.5,714.8 H756.6 V718 H742.5 Z" fill="#1e9ad0"/><path d="M755.6,716.5 H757.8 V726 H755.6 Z" fill="#1a7fb0"/><path d="M738.3,716.6 L756,719.2 L761.8,737.4 L761.8,740 L744,740.5 L738.3,719 Z" fill="#c6aa58"/><path d="M738.3,716.6 L742.5,720.3 L744.1,752.5 L743.3,756.1 L738.6,735 Z" fill="#6a5c3a"/><path d="M744,740 H761.8 V755.8 H744 Z" fill="#fff36a"/><ellipse cx="748.8" cy="721.4" rx="3.6" ry="2.2" fill="#f4d860"/><ellipse cx="750.3" cy="728.7" rx="3.6" ry="2.2" fill="#f4d860"/><ellipse cx="751.9" cy="736.4" rx="3.6" ry="2.2" fill="#f4d860"/><path d="M745.1,755.3 H758.9 V758.7 L745.1,759.7 Z" fill="#1e9ad0"/></g><ellipse cx="747.3" cy="730.7" rx="190.6" ry="173.3" transform="rotate(-3 747.3 730.7)" stroke="#46be46" stroke-width="2.6" fill="none"/><ellipse cx="749.65" cy="745.05" rx="192.2" ry="85.9" transform="rotate(-0.2 749.65 745.05)" stroke="#3b3bc2" stroke-width="3.6" fill="none"/><ellipse cx="751.7" cy="738.8" rx="20" ry="194" transform="rotate(-2.95 751.7 738.8)" stroke="#cc4040" stroke-width="3.6" fill="none"/></svg>
<div class="t" style="left:1349.90px;top:986.36px;font-size:13.08px;line-height:14.61px;color:#101820;font-weight:bold;transform:scaleX(0.9725);">CCR10_Druhy tisk</div>
<svg class="s" style="left:1468.00px;top:980.60px;" width="22" height="22" viewBox="0 0 22 22"><g transform="rotate(-45 11 11)"><path d="M1,11 L4.4,8.3 H19.4 A1.8,1.8 0 0 1 21.2,10.1 V11.9 A1.8,1.8 0 0 1 19.4,13.7 H4.4 Z" fill="#262a2d"/><path d="M7,11 H15.5" stroke="#aaa" stroke-width="0.7" stroke-dasharray="1 1"/><path d="M17,8.3 V13.7" stroke="#f4f4f4" stroke-width="0.8"/><path d="M4.2,8.6 V13.4" stroke="#f0f0f0" stroke-width="1.3"/></g></svg>
<div class="t" style="left:1356.60px;top:1011.05px;font-size:12.21px;line-height:13.64px;color:#101820;font-weight:bold;transform:scaleX(1.1995);">8.0 x 23.5 x 8.0 mm</div>
<div class="r" style="left:0.00px;top:100.00px;width:49.00px;height:50.00px;background:#ffffff;"></div>
<div class="r" style="left:0.00px;top:101.00px;width:48.00px;height:48.00px;background:#1f2427;border:1px solid #0e1214;box-sizing:border-box;border-left:none;"></div>
<div class="r" style="left:0.00px;top:160.00px;width:49.00px;height:290.00px;background:#ffffff;"></div>
<div class="r" style="left:0.00px;top:161.00px;width:48.00px;height:288.00px;background:#1f2427;border:1px solid #0e1214;box-sizing:border-box;border-left:none;"></div>
<div class="r" style="left:0.00px;top:257.00px;width:48.00px;height:48.00px;background:#43474b;"></div>
<svg class="s" style="left:9.00px;top:113.00px;" width="31" height="24" viewBox="0 0 31 24"><path d="M1.8,21 V2.3 H6.3 L7.8,4.3 H20.8 V6.3" fill="none" stroke="#fff" stroke-width="1.3"/><path d="M1.8,21.8 L8.3,8.3 H28.8 L22.8,21.8 Z" fill="#fff"/></svg>
<svg class="s" style="left:0.00px;top:161.00px;" width="48" height="48" viewBox="0 0 48 48"><g transform="translate(0,-161)"><path d="M15.3,173.5 H32.7 L29.3,181 L35.8,196.5 H12.2 L18.4,181 Z" fill="none" stroke="#fff" stroke-width="1.3"/><path d="M12.2,186 H20.6" stroke="#c8c8c8" stroke-width="1.8"/><path d="M20.3,183.1 L24.9,186 L20.3,188.9 Z" fill="#fff"/></g></svg>
<svg class="s" style="left:0.00px;top:209.00px;" width="48" height="48" viewBox="0 0 48 48"><g transform="translate(0,-209)"><path d="M17.8,222.7 H32.7 L29.9,229.6 L35.5,243.3 H25.2 M17.8,222.7 L20,229.3" fill="none" stroke="#d0d0d0" stroke-width="1.3"/><path d="M14,229.3 H23.7 L22.1,233.3 L25.4,243.8 H12 L15.6,233.3 Z" fill="#fff"/></g></svg>
<svg class="s" style="left:0.00px;top:257.00px;" width="48" height="48" viewBox="0 0 48 48"><g transform="translate(0,-257)"><path d="M15.3,269.5 H32.7 L29.3,277.6 L35.8,292.5 H12.2 L18.4,277.6 Z" fill="none" stroke="#fff" stroke-width="1.3"/><ellipse cx="14.7" cy="278.2" rx="3.6" ry="3.9" fill="none" stroke="#fff" stroke-width="1.2"/><ellipse cx="33.1" cy="278.2" rx="3.6" ry="3.9" fill="none" stroke="#fff" stroke-width="1.2"/><path d="M16.2,282 Q18,283.2 20.6,283.2" stroke="#fff" stroke-width="1.2" fill="none"/><path d="M20.3,280.4 L25.2,283.2 L20.3,286 Z" fill="#fff"/></g></svg>
<svg class="s" style="left:0.00px;top:305.00px;" width="48" height="48" viewBox="0 0 48 48"><g transform="translate(0,-305)"><path d="M23.9,318.4 H15.9 L19.3,325.3 L13.4,338.4 H23.9" fill="none" stroke="#fff" stroke-width="1.3"/><path d="M23.9,318.4 H32.1 L29.3,325.3 L34.6,338.9 H23.9 Z" fill="#fff"/><path d="M23.9,315.6 V341.8" stroke="#ddd" stroke-width="1.3"/></g></svg>
<svg class="s" style="left:0.00px;top:353.00px;" width="48" height="48" viewBox="0 0 48 48"><g transform="translate(0,-353)"><path d="M21.8,362 H36.5 L34,369.2 L39,381.7 H32 L28,369 Z" fill="#fff"/><path d="M15.3,367.3 H31.2 L28.9,374 L34.6,387.3 H26" fill="none" stroke="#fff" stroke-width="1.3"/><path d="M11.2,373 H25.9 L24,379.2 L28.4,392 H9 L13.7,379.2 Z" fill="#fff"/></g></svg>
<svg class="s" style="left:0.00px;top:401.00px;" width="48" height="48" viewBox="0 0 48 48"><g transform="translate(0,-401)"><rect x="12.8" y="413.8" width="7.6" height="22.5" fill="none" stroke="#fff" stroke-width="1.3"/><path d="M20.4,420.6 H28.1 V428.7 H36.2 V436.9 H20.4 Z" fill="#fff"/><path d="M14.9,423.7 L18.1,426.9 M18.1,423.7 L14.9,426.9" stroke="#fff" stroke-width="1.1"/></g></svg>
<div class="r" style="left:59px;top:257px;width:133px;height:109px;background:#fff;border:1px solid #c8c8c8;box-sizing:border-box"></div>
<svg class="s" style="left:49.00px;top:270.00px;" width="12" height="22" viewBox="0 0 12 22"><path d="M10.5,1 L1.2,11 L10.5,21" fill="#fff" stroke="#c8c8c8" stroke-width="1"/><rect x="10" y="2" width="2" height="18" fill="#fff"/></svg>
<div class="r" style="left:72.00px;top:269.00px;width:48.00px;height:48.00px;background:#1f2427;"></div>
<div class="r" style="left:132.00px;top:269.00px;width:48.00px;height:48.00px;background:#1f2427;"></div>
<svg class="s" style="left:72.00px;top:269.00px;" width="48" height="48" viewBox="0 0 48 48"><ellipse cx="24.1" cy="30.9" rx="12.6" ry="4.8" fill="none" stroke="#fff" stroke-width="1.15"/><path d="M15.2,21.5 H32.8 L29.4,29.3 L30.4,34.2 Q24,36.4 18.2,34.2 L18.8,29.3 Z" fill="#1f2427" stroke="#fff" stroke-width="1.15"/><path d="M28.9,12.6 Q24,8.8 20.4,15.2" fill="none" stroke="#fff" stroke-width="1.2"/><path d="M17.4,15.2 L20.3,20.2 L23.1,15.2 Z" fill="#fff"/></svg>
<svg class="s" style="left:132.00px;top:269.00px;" width="48" height="48" viewBox="0 0 48 48"><path d="M11.9,15.7 Q21,5 31.5,17.5" fill="none" stroke="#fff" stroke-width="1.3"/><path d="M29.4,17.2 L34.1,23 L35.6,17.9 Z" fill="#fff"/><path d="M10.7,35.5 L24.8,23.8 L37.3,25.2 L32.5,27.8 L28,37.5 Z" fill="none" stroke="#fff" stroke-width="1.3" stroke-linejoin="round"/></svg>
<div class="r" style="left:72.00px;top:329.00px;width:24.00px;height:24.00px;background:#fff;border:1px solid #333;box-sizing:border-box;"></div>
<svg class="s" style="left:72.00px;top:329.00px;" width="24" height="24" viewBox="0 0 24 24"><path d="M7.2,12.4 L10.5,15.6 L16.4,9" stroke="#7a7a7a" stroke-width="1.8" fill="none"/></svg>
<div class="t" style="left:100.50px;top:334.79px;font-size:12.94px;line-height:14.45px;color:#1a1a1a;transform:scaleX(0.9233);">Snap Rotation</div>
<div class="r" style="left:0;top:1040px;width:1920px;height:40px;background:radial-gradient(70px 6px at 990px 36px,rgba(170,150,140,0.45),rgba(0,0,0,0)),radial-gradient(110px 7px at 1480px 34px,rgba(150,135,130,0.35),rgba(0,0,0,0)),radial-gradient(60px 6px at 1240px 28px,rgba(210,225,235,0.45),rgba(0,0,0,0)),radial-gradient(90px 8px at 880px 28px,rgba(60,45,45,0.35),rgba(0,0,0,0)),radial-gradient(160px 12px at 560px 32px,rgba(110,110,115,0.45),rgba(0,0,0,0)),radial-gradient(140px 10px at 820px 10px,rgba(150,100,85,0.45),rgba(0,0,0,0)),radial-gradient(120px 10px at 1000px 10px,rgba(140,90,78,0.55),rgba(0,0,0,0)),radial-gradient(110px 10px at 1050px 32px,rgba(160,130,115,0.45),rgba(0,0,0,0)),radial-gradient(130px 9px at 1200px 34px,rgba(190,205,215,0.75),rgba(0,0,0,0)),radial-gradient(90px 8px at 1300px 20px,rgba(170,140,130,0.40),rgba(0,0,0,0)),radial-gradient(160px 7px at 1150px 7px,rgba(120,70,60,0.45),rgba(0,0,0,0)),radial-gradient(120px 10px at 1450px 15px,rgba(140,110,105,0.40),rgba(0,0,0,0)),radial-gradient(120px 9px at 1560px 22px,rgba(130,115,115,0.40),rgba(0,0,0,0)),radial-gradient(90px 7px at 1400px 8px,rgba(110,70,65,0.45),rgba(0,0,0,0)),radial-gradient(120px 10px at 700px 22px,rgba(45,35,40,0.45),rgba(0,0,0,0)),linear-gradient(90deg,#2c2d32 0,#303136 300px,#36363b 560px,#3c3538 720px,#4e3e3c 880px,#5c4440 1000px,#66483f 1150px,#654842 1350px,#5a4644 1500px,#4c4244 1620px,#3a3639 1720px,#2c2d33 1800px,#2a2c32 1920px)"></div>
<div class="r" style="left:0;top:1040px;width:1920px;height:40px;background:linear-gradient(180deg,rgba(0,0,0,0.35) 0,rgba(0,0,0,0.12) 12%,rgba(255,255,255,0.04) 45%,rgba(0,0,0,0.06) 100%)"></div>
<div class="r" style="left:0.00px;top:1040.00px;width:1920.00px;height:1.00px;background:#1e2024;"></div>
<div class="r" style="left:0.00px;top:1041.00px;width:1920.00px;height:1.00px;background:#6d7076;"></div>
<svg class="s" style="left:7.00px;top:1041.00px;" width="40" height="40" viewBox="0 0 40 40"><defs><radialGradient id="orb" cx="50%" cy="40%" r="60%"><stop offset="0" stop-color="#5ab4e0"/><stop offset="0.55" stop-color="#1e6aa4"/><stop offset="0.85" stop-color="#0e3a64"/><stop offset="1" stop-color="#38c8f8"/></radialGradient></defs><circle cx="20" cy="19.6" r="18.6" fill="url(#orb)" stroke="#1a2a3a" stroke-width="1"/><path d="M9.5,9.5 Q13,7.5 18.5,9.5 L17.5,17 Q13,15 8.5,17 Z" fill="#f26522"/><path d="M20,9.5 Q25,11.5 30,9 L29,17 Q24,19 19,17 Z" fill="#7cbb2a"/><path d="M8.3,18.5 Q13,16.5 17.3,18.5 L16.3,26 Q12,24 7.3,26 Z" fill="#1e90e0"/><path d="M18.8,18.5 Q24,20.5 28.8,18.5 L27.8,26 Q23,28 17.8,26 Z" fill="#fbbc1a"/><ellipse cx="20" cy="11" rx="14" ry="8" fill="rgba(255,255,255,0.15)"/></svg>
<svg class="s" style="left:57.50px;top:1045.00px;" width="9" height="32" viewBox="0 0 9 32"><rect x="0" y="0" width="1.6" height="1.6" fill="#111"/><rect x="3" y="0" width="1.6" height="1.6" fill="#111"/><rect x="6" y="0" width="1.6" height="1.6" fill="#111"/><rect x="0" y="4" width="1.6" height="1.6" fill="#111"/><rect x="3" y="4" width="1.6" height="1.6" fill="#111"/><rect x="6" y="4" width="1.6" height="1.6" fill="#111"/><rect x="0" y="8" width="1.6" height="1.6" fill="#111"/><rect x="3" y="8" width="1.6" height="1.6" fill="#111"/><rect x="6" y="8" width="1.6" height="1.6" fill="#111"/><rect x="0" y="12" width="1.6" height="1.6" fill="#111"/><rect x="3" y="12" width="1.6" height="1.6" fill="#111"/><rect x="6" y="12" width="1.6" height="1.6" fill="#111"/><rect x="0" y="16" width="1.6" height="1.6" fill="#111"/><rect x="3" y="16" width="1.6" height="1.6" fill="#111"/><rect x="6" y="16" width="1.6" height="1.6" fill="#111"/><rect x="0" y="20" width="1.6" height="1.6" fill="#111"/><rect x="3" y="20" width="1.6" height="1.6" fill="#111"/><rect x="6" y="20" width="1.6" height="1.6" fill="#111"/><rect x="0" y="24" width="1.6" height="1.6" fill="#111"/><rect x="3" y="24" width="1.6" height="1.6" fill="#111"/><rect x="6" y="24" width="1.6" height="1.6" fill="#111"/><rect x="0" y="28" width="1.6" height="1.6" fill="#111"/><rect x="3" y="28" width="1.6" height="1.6" fill="#111"/><rect x="6" y="28" width="1.6" height="1.6" fill="#111"/></svg>
<svg class="s" style="left:1700.50px;top:1045.00px;" width="9" height="32" viewBox="0 0 9 32"><rect x="0" y="0" width="1.6" height="1.6" fill="#111"/><rect x="3" y="0" width="1.6" height="1.6" fill="#111"/><rect x="6" y="0" width="1.6" height="1.6" fill="#111"/><rect x="0" y="4" width="1.6" height="1.6" fill="#111"/><rect x="3" y="4" width="1.6" height="1.6" fill="#111"/><rect x="6" y="4" width="1.6" height="1.6" fill="#111"/><rect x="0" y="8" width="1.6" height="1.6" fill="#111"/><rect x="3" y="8" width="1.6" height="1.6" fill="#111"/><rect x="6" y="8" width="1.6" height="1.6" fill="#111"/><rect x="0" y="12" width="1.6" height="1.6" fill="#111"/><rect x="3" y="12" width="1.6" height="1.6" fill="#111"/><rect x="6" y="12" width="1.6" height="1.6" fill="#111"/><rect x="0" y="16" width="1.6" height="1.6" fill="#111"/><rect x="3" y="16" width="1.6" height="1.6" fill="#111"/><rect x="6" y="16" width="1.6" height="1.6" fill="#111"/><rect x="0" y="20" width="1.6" height="1.6" fill="#111"/><rect x="3" y="20" width="1.6" height="1.6" fill="#111"/><rect x="6" y="20" width="1.6" height="1.6" fill="#111"/><rect x="0" y="24" width="1.6" height="1.6" fill="#111"/><rect x="3" y="24" width="1.6" height="1.6" fill="#111"/><rect x="6" y="24" width="1.6" height="1.6" fill="#111"/><rect x="0" y="28" width="1.6" height="1.6" fill="#111"/><rect x="3" y="28" width="1.6" height="1.6" fill="#111"/><rect x="6" y="28" width="1.6" height="1.6" fill="#111"/></svg>
<svg class="s" style="left:88.00px;top:1041.00px;" width="34" height="36" viewBox="0 0 34 36"><circle cx="19" cy="19" r="11.5" fill="#36a6e6"/><circle cx="19" cy="19" r="6" fill="#2a2a30"/><rect x="12" y="17" width="15" height="3.2" fill="#36a6e6"/><rect x="19" y="20.2" width="12" height="4" fill="#2a2a30"/><path d="M5,31 Q1,25 12,13 Q24,2 31,4 Q34,8 28,15" fill="none" stroke="#f0c020" stroke-width="2.6"/></svg>
<svg class="s" style="left:149.00px;top:1045.00px;" width="36" height="32" viewBox="0 0 36 32"><path d="M2,6 H12 L14,4 H32 V28 H2 Z" fill="#e9cf7a"/><path d="M2,10 H33 V28 H2 Z" fill="#f5e3a0"/><rect x="6" y="3" width="4" height="3" fill="#2a9a3a"/><rect x="13" y="5" width="4" height="3" fill="#c83a2a"/><rect x="22" y="7" width="4" height="3" fill="#2a7ac8"/><path d="M8,30 V20 H28 V30 H24 V24 H12 V30 Z" fill="#8ac8ea" stroke="#5a9ac8" stroke-width="0.8"/></svg>
<svg class="s" style="left:213.00px;top:1044.00px;" width="30" height="32" viewBox="0 0 30 32"><path d="M2,4 H24 L28,8 V30 H6 L2,26 Z" fill="#8cc0e0"/><path d="M2,4 H24 V26 H2 Z" fill="#a8d2ee"/><circle cx="13.5" cy="15" r="8.5" fill="#f07a1a" stroke="#fff" stroke-width="1.5"/><path d="M11,10.5 L18.5,15 L11,19.5 Z" fill="#fff"/></svg>
<div class="r" style="left:262px;top:1041px;width:58px;height:38px;background:linear-gradient(160deg,#9a9a9a 0,#747474 35%,#4e4e4e 60%,#6a6a6a 100%);border:1px solid rgba(255,255,255,0.45);box-shadow:inset 0 0 0 1px rgba(0,0,0,0.3);border-radius:3px;box-sizing:border-box"></div>
<div class="r" style="left:324px;top:1041px;width:58px;height:38px;background:linear-gradient(160deg,#d8d8d8 0,#b4b4b4 30%,#8c8c8c 55%,#a8a8a8 100%);border:1px solid rgba(255,255,255,0.45);box-shadow:inset 0 0 0 1px rgba(0,0,0,0.3);border-radius:3px;box-sizing:border-box"></div>
<div class="r" style="left:386px;top:1041px;width:58px;height:38px;background:linear-gradient(160deg,#9a9a9a 0,#747474 35%,#4e4e4e 60%,#6a6a6a 100%);border:1px solid rgba(255,255,255,0.45);box-shadow:inset 0 0 0 1px rgba(0,0,0,0.3);border-radius:3px;box-sizing:border-box"></div>
<svg class="s" style="left:275.00px;top:1043.00px;" width="32" height="34" viewBox="0 0 32 34"><ellipse cx="16" cy="17" rx="12.8" ry="14.2" fill="#d0121c"/><ellipse cx="16" cy="17" rx="6" ry="10.8" fill="#5a5a5a"/><ellipse cx="16" cy="17" rx="5" ry="10" fill="#6e6e6e"/></svg>
<svg class="s" style="left:336.00px;top:1044.00px;" width="34" height="32" viewBox="0 0 34 32"><path d="M5,2 H32 V23 L24,31 H0 V8 Z" fill="#1aa3de"/><path d="M24,10 H15 A6,6 0 0 0 15,22 H24" stroke="#fff" stroke-width="5" fill="none"/></svg>
<svg class="s" style="left:396.00px;top:1042.00px;" width="36" height="34" viewBox="0 0 36 34"><path d="M3,22 Q1,11 14,9 Q27,8 29,17 Q29,23 23,23 Q19,23 19,27 Q17,32 10,30 Q4,28 3,22 Z" fill="#dce9f2" stroke="#7aa0c0" stroke-width="0.8"/><circle cx="8.5" cy="19" r="2.5" fill="#e03a3a"/><circle cx="12.5" cy="13.5" r="2.5" fill="#3ab04a"/><circle cx="19" cy="12" r="2.5" fill="#f0c030"/><circle cx="14" cy="22" r="2.5" fill="#2a60b8"/><path d="M31,5 L20,30" stroke="#d89a40" stroke-width="2.6"/><path d="M29,2 L34,1 L32,8 Z" fill="#e8b060"/></svg>
<div class="t" style="left:1718.75px;top:1051.64px;font-size:11.34px;line-height:12.66px;color:#f4f4f4;transform:scaleX(0.8762);">CS</div>
<svg class="s" style="left:1749.50px;top:1058.00px;" width="8" height="6" viewBox="0 0 8 6"><path d="M0,5.5 L4,0.5 L8,5.5 Z" fill="#fff"/></svg>
<svg class="s" style="left:1770.00px;top:1053.00px;" width="16" height="16" viewBox="0 0 16 16"><path d="M1,0.5 V15" stroke="#fff" stroke-width="1.3"/><path d="M1.8,1.5 Q5,0 8,1.5 T15,2 L13,5.5 L15,8 Q11,9 8,7.5 T1.8,7.5 Z" fill="#fff"/></svg>
<svg class="s" style="left:1794.00px;top:1053.00px;" width="17" height="17" viewBox="0 0 17 17"><path d="M1,1 V6 H4 V1 M2.5,6 V10 H6" stroke="#fff" stroke-width="1.2" fill="none"/><rect x="6" y="5" width="10" height="8" fill="#3a3a3a" stroke="#fff" stroke-width="1.2"/><path d="M11,13 V15 M7.5,15.5 H14.5" stroke="#fff" stroke-width="1.2"/></svg>
<svg class="s" style="left:1818.00px;top:1053.00px;" width="17" height="16" viewBox="0 0 17 16"><path d="M1,5 H4 L8,1 V15 L4,11 H1 Z" fill="#fff"/><path d="M10.5,5.5 Q12,8 10.5,10.5 M12.8,3.5 Q15.2,8 12.8,12.5" stroke="#fff" stroke-width="1.2" fill="none"/></svg>
<div class="t" style="left:1859.50px;top:1047.05px;font-size:12.21px;line-height:13.64px;color:#f4f4f4;transform:scaleX(0.8837);">15:29</div>
<div class="t" style="left:1845.70px;top:1063.75px;font-size:12.21px;line-height:13.64px;color:#f4f4f4;transform:scaleX(0.8722);">30.12.2018</div>
<div class="r" style="left:1906px;top:1041px;width:13px;height:38px;border:1px solid rgba(255,255,255,0.3);box-shadow:inset 0 0 0 1px rgba(0,0,0,0.4);background:linear-gradient(135deg,rgba(255,255,255,0.15),rgba(255,255,255,0.03))"></div>
</body></html>
